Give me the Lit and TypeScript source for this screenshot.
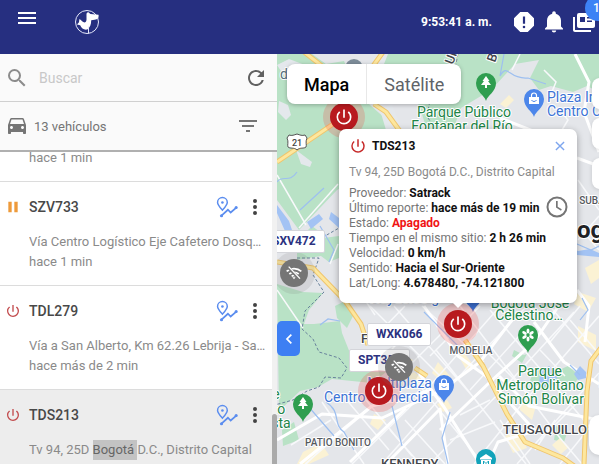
import { LitElement, html, svg, css } from "lit";
import { customElement, property, query } from "lit/decorators.js";
import { classMap } from "lit/directives/class-map.js";

type Status = "off" | "paused";

interface Vehicle {
  plate: string;
  address: [string, string, string];
  ago: string;
  status: Status;
  selected?: boolean;
}

const VEHICLES: Vehicle[] = [
  { plate: "SXV472", address: ["Bogotá D.C., Distrito Capital", "", ""], ago: "hace 1 min", status: "off" },
  { plate: "SZV733", address: ["Vía Centro Logístico Eje Cafetero Dosquebradas", "", ""], ago: "hace 1 min", status: "paused" },
  { plate: "TDL279", address: ["Vía a San Alberto, Km 62.26 Lebrija - Santander", "", ""], ago: "hace más de 2 min", status: "off" },
  { plate: "TDS213", address: ["Tv 94, 25D ", "Bogotá ", "D.C., Distrito Capital"], ago: "hace más de 19 min", status: "off", selected: true },
];

const DETAILS: { label: string; value: string; alert?: boolean }[] = [
  { label: "Proveedor", value: "Satrack" },
  { label: "Último reporte", value: "hace más de 19 min" },
  { label: "Estado", value: "Apagado", alert: true },
  { label: "Tiempo en el mismo sitio", value: "2 h 26 min" },
  { label: "Velocidad", value: "0 km/h" },
  { label: "Sentido", value: "Hacia el Sur-Oriente" },
  { label: "Lat/Long", value: "4.678480, -74.121800" },
];

const icon = (size: number, body: unknown) =>
  html`<svg width=${size} height=${size} viewBox="0 0 24 24" fill="currentColor" aria-hidden="true">${body}</svg>`;

const power = svg`<path d="M13 3h-2v10h2V3zm4.83 2.17-1.42 1.42A6.92 6.92 0 0 1 19 12c0 3.87-3.13 7-7 7A6.995 6.995 0 0 1 7.58 6.58L6.17 5.17A8.932 8.932 0 0 0 3 12a9 9 0 0 0 18 0c0-2.74-1.23-5.18-3.17-6.83z"/>`;
const pause = svg`<path d="M5 4h5v16H5zM14 4h5v16h-5z"/>`;
const menu = svg`<path d="M3 18h18v-2H3v2zm0-5h18v-2H3v2zm0-7v2h18V6H3z"/>`;
const search = svg`<path d="M15.5 14h-.79l-.28-.27A6.471 6.471 0 0 0 16 9.5 6.5 6.5 0 1 0 9.5 16c1.61 0 3.09-.59 4.23-1.57l.27.28v.79l5 4.99L20.49 19l-4.99-5zm-6 0C7.01 14 5 11.99 5 9.5S7.01 5 9.5 5 14 7.01 14 9.5 11.99 14 9.5 14z"/>`;
const refresh = svg`<path d="M17.65 6.35A7.958 7.958 0 0 0 12 4c-4.42 0-7.99 3.58-7.99 8s3.57 8 7.99 8c3.73 0 6.84-2.55 7.73-6h-2.08A5.99 5.99 0 0 1 12 18c-3.31 0-6-2.69-6-6s2.69-6 6-6c1.66 0 3.14.69 4.22 1.78L13 11h7V4l-2.35 2.35z"/>`;
const car = svg`<path d="M18.92 5.01C18.72 4.42 18.16 4 17.5 4h-11c-.66 0-1.21.42-1.42 1.01L3 11v8c0 .55.45 1 1 1h1c.55 0 1-.45 1-1v-1h12v1c0 .55.45 1 1 1h1c.55 0 1-.45 1-1v-8l-2.08-5.99zM6.5 15c-.83 0-1.5-.67-1.5-1.5S5.67 12 6.5 12s1.5.67 1.5 1.5S7.33 15 6.5 15zm11 0c-.83 0-1.5-.67-1.5-1.5s.67-1.5 1.5-1.5 1.5.67 1.5 1.5-.67 1.5-1.5 1.5zM5 10l1.5-4.5h11L19 10H5z"/>`;
const filter = svg`<path d="M10 18h4v-2h-4v2zM3 6v2h18V6H3zm3 7h12v-2H6v2z"/>`;
const more = svg`<path d="M12 8a2 2 0 1 0 0-4 2 2 0 0 0 0 4zm0 2a2 2 0 1 0 0 4 2 2 0 0 0 0-4zm0 6a2 2 0 1 0 0 4 2 2 0 0 0 0-4z"/>`;
const route = svg`<g fill="none" stroke="currentColor" stroke-width="1.6"><path d="M7 15.500C4 12 1.700 9.500 1.700 7a5.300 5.300 0 0 1 10.600 0C12.300 9.500 10 12 7 15.500z"/><path d="M6 21.500l7-6.500 3 3 6.500-5.500" stroke-width="1.900"/></g><circle cx="7" cy="7" r="1.400"/><circle cx="6" cy="21.500" r="1.700"/><circle cx="22" cy="12.500" r="1.700"/>`;
const warning = svg`<path d="M15.730 2H8.270L2 8.270v7.460L8.270 22h7.460L22 15.730V8.270L15.730 2zM12 18.300a1.300 1.300 0 1 1 0-2.600 1.300 1.300 0 0 1 0 2.600zm1.100-4.500h-2.200V6.500h2.200v7.300z"/>`;
const bell = svg`<path d="M12 22.500c1.200 0 2.200-.9 2.200-2H9.800c0 1.100 1 2 2.200 2zm7-6v-6c0-3.200-1.900-5.900-5.200-6.700V3a1.800 1.800 0 0 0-3.600 0v.8C6.900 4.600 5 7.300 5 10.500v6l-2 2v1h18v-1l-2-2z"/>`;
const news = svg`<path d="M3 7H1v13c0 1.100.9 2 2 2h16v-2H3V7z"/><path d="M21 3H7a2 2 0 0 0-2 2v11c0 1.100.9 2 2 2h14c1.100 0 2-.9 2-2V5a2 2 0 0 0-2-2zm-8 9H8V7h5v5zm7 0h-5v-1.500h5V12zm0-3.500h-5V7h5v1.500z"/>`;
const clock = svg`<path d="M12 1.500a10.500 10.500 0 1 0 0 21 10.500 10.500 0 0 0 0-21zm0 19a8.500 8.500 0 1 1 0-17 8.500 8.500 0 0 1 0 17z"/><path d="M12.700 6h-1.700v6.600l5 3.100.8-1.400-4.100-2.500V6z"/>`;
const cross = svg`<path d="M5 5l14 14M19 5L5 19" fill="none" stroke="currentColor" stroke-width="2.400"/>`;
const chevron = svg`<path d="M15.500 5.500L9 12l6.500 6.500" fill="none" stroke="currentColor" stroke-width="2.600"/>`;
const noSignal = svg`<g fill="none" stroke="currentColor" stroke-width="2.600"><path d="M1 9.500C7 4 17 4 23 9.500"/><path d="M5 13.500c4-3.500 10-3.500 14 0"/><path d="M8.500 17c2-1.600 5-1.600 7 0"/></g><path d="M9.500 18.500h5L12 21.500z"/><path d="M3 3l17 18" stroke="#757575" stroke-width="4.500"/><path d="M4 2.500l17 18" stroke="currentColor" stroke-width="2"/>`;

const logo = html`<svg width="26" height="26" viewBox="0 0 26 26" aria-label="Satrack" role="img">
  <circle cx="13" cy="13" r="11.500" fill="none" stroke="#e6e9fb" stroke-width="1"/>
  <path fill="#fff" d="M12.500 4.500l1.500-1.500 2.500 2 8 .8c.6 2.600-.6 4.800-3.900 5l-3.400.4c0 4.200-1.200 7.200-3.800 9.300-3.400.6-6-.9-7.200-4.200L3 15.500l2-2.200.4-3.300c2.200 1.200 3.300 3.400 5.200 3.600 1.700-.6 2.100-2.400 1.900-4.700z"/>
  <path d="M14.500 17.500v7" stroke="#e6e9fb"/>
</svg>`;

const pin = (x: number, y: number, color: string, glyph: unknown) => svg`
  <g transform="translate(${x} ${y})">
    <path fill=${color} d="M0 15C-1.500 9-10 6-10-3a10 10 0 0 1 20 0C10 6 1.500 9 0 15z"/>
    <g fill="#fff">${glyph}</g>
  </g>`;
const tree = svg`<path d="M0-10l3.500 5H2l3 4H1v3h-2v-3h-4l3-4h-1.500z"/>`;
const bag = svg`<path d="M-5-5H5v7H-5z"/><path d="M-2.500-5v-1.500a2.500 2.500 0 0 1 5 0V-5" fill="none" stroke="#fff" stroke-width="1.200"/><path d="M-2.500-2c1 2 4 2 5 0" fill="none" stroke="#4c86ea"/>`;
const flower = svg`${[0, 60, 120, 180, 240, 300].map((a) => svg`<ellipse cy="-4" rx="1.500" ry="2.500" transform="translate(0 -3) rotate(${a})"/>`)}`;
const museum = svg`<path d="M-6-4L0-8l6 4v1.500H-6zM-5-2H5v6H-5z"/><path d="M-2.500 3v-4L0 1.500 2.500-1v4" fill="none" stroke="#12a3ba"/>`;

@customElement("city-map")
export class CityMap extends LitElement {
  static styles = css`
    :host { display: block; height: 100%; overflow: hidden; background: #e4e6ea; }
    svg { display: block; width: 100%; height: 100%; font-family: Roboto, sans-serif; }
    .park { fill: #b9e2c6; }
    .water { fill: #a3c3f4; }
    .stream { fill: none; stroke: #9dbff0; stroke-width: 1.2; }
    .street { fill: none; stroke: #f8f9fb; stroke-width: 1.5; }
    .avenue { fill: none; stroke: #fff; stroke-width: 3; stroke-linejoin: round; }
    .block { fill: #fbf2d4; }
    .casing { fill: none; stroke: #f0c56c; stroke-width: 5; stroke-linejoin: round; }
    .highway { fill: none; stroke: #fde79e; stroke-width: 3; stroke-linejoin: round; }
    .limit { fill: none; stroke: #68829c; stroke-width: 1; stroke-dasharray: 3 2; }
    text { paint-order: stroke; stroke: #fff; stroke-width: 2px; stroke-linejoin: round; font-size: 14px; }
    .nature { fill: #218447; text-anchor: middle; }
    .shop { fill: #3c73d6; }
    .end { text-anchor: end; }
    .area { fill: #55595e; font-size: 10px; font-weight: 500; text-anchor: middle; }
    .district { fill: #44474b; font-size: 13px; font-weight: 500; }
    .city { fill: #202124; font-size: 24px; font-weight: 700; }
    .shield { fill: #fff; stroke: #555; }
    .number { fill: #444; font-size: 9px; font-weight: 500; text-anchor: middle; stroke: none; }
  `;

  render() {
    return html`<svg viewBox="277 54 322 410" preserveAspectRatio="xMinYMin slice" role="img" aria-label="Mapa de Bogotá">
      <path class="park" d="M277 54h35l14 10 18-3 12 28 14 16 25 22-28 9-8 42-22 12-38 40-22-30z"/>
      <path class="park" d="M385 54h70l144 0v38l-12-6-14 6-22-6-12 4-9-12 9-18-24 4-24 26-30 18-8 22h-26l-8-25-22-20-18-8z"/>
      <path class="park" d="M297 248l10-8 32-4v22l-10 4-8-6-24 4z"/>
      <path class="park" d="M277 284l26 8 20 1-14 17-5 14 10 0 26-3 2 12 8 20 12 8 28 8-18 14-40-4-14 8-18 4-21 20z"/>
      <path class="park" d="M335 306l8-4 12 10-8 16-10-10zM282 430l12-8 5 18-16 6zM514 350l10 5 3-1-5 9-10-7zM536 368l14 6 18-8 12 10-6 8-18-4-14 10-12-10zM556 426l12 4-4 12-10-2zM300 238l12-12 8 6-8 12z"/>
      <path d="M277 65l12-6 16 6 2 12-18 6zM279 101l9 4 3 10-5 5-8-8zM296 150l16 12-2 5-9-3zM362 66l18-12h8l-12 30zM380 110l12-6 10 26h-16z" fill="#e4e8ec"/>

      <path class="block" d="M303 452l18-9 8 12-20 9h-12zM374 414l12 6-8 10-8-6zM398 382l16-10 12 10-14 8zM438 362l12 14-9 5-9-8zM492 150l10-6 6 8-10 7zM500 104l9-9 5 5-8 8zM585 268l14-8v18l-8 6zM578 292l18 6-8 14-14-8zM462 350l12 16-7 5-8-14zM520 400l16 6-4 14-12-10zM578 326l18 9v16l-18-9zM560 438l9 9-8 7-9-9zM391 350l22 10-12 12-18-9zM437 404l10-4 5 8-9 4zM505 436l13-5 9 17-14 5z"/>

      <g class="street">
        <path d="M352 464L420 397 502 304M382 464l84-95 60-62M430 464l74-76 70-76M474 464l48-60 77-88M517 464l82-91M560 464l39-48M305 464l70-60M322 402l42 62M345 398l44 52M366 400l46 56M415 380l68 84M436 350l90 114M394 306l80 92 42 54M460 306l100 132 22 26M490 310l109 128M548 304l51 60M422 306l62 56M370 306l70 70M410 330l-32 34M445 330l-68 68M578 180l21 30M560 110l8 10-9 15M578 240l21-24M578 226l21 24M544 70l12 12-5 12 9 7M520 54l-8 16M405 306l-35 36M480 306l-50 50M530 324l-60 66M580 306l-30 36M277 290l26 38M277 175l29 50M299 228l39-44M338 244l-8 20M331 420l-40 25M341 430l-35 34"/>
        <path d="M345 270l30 45M540 350l25 26M570 320l29 34M485 350l45 45M500 420l30 44M405 420l40 44M390 430l30 34M580 400l-40 40M460 415l30-15M450 440l45-18M535 450l20-30"/>
      </g>
      <g class="avenue">
        <path d="M277 440l45-26 60 4 60-28 38-28 38-50M418 372l26 35 36 57M300 464l72-58 60-16M424 306l34 50 28 20 50 56M440 430l50-48 44-40 26-38M575 54l14 28-5 30 15 40M577 158l22 8M500 118l38 15M577 290l12 16-4 36"/>
        <path d="M350 462l56-54M386 464l54-55 8 55M599 420l-70-14-30-30M599 384l-35-22-30-40M488 464l10-22 40-12"/>
      </g>

      <path class="water" d="M277 205l12 16 4 12-8-2-8-18zM331 212l8 6v10l-10-9zM307 222l12-8 4 5-12 10zM560 250l10-3 8 4 12-2 9 4v4l-22-2zM574 374l6-8 6 6 0 6-8 2zM540 372l9-6 10 8-8 14-12-4z"/>
      <path class="stream" d="M277 182c6-8 12 2 20-10M500 76c8-14 8 4 28 2l18 6M500 76l4-22M300 210l24-22M326 402c16 10 6 22 18 30l10 18M308 406l26 30M392 406l10 40M577 244l14 6 8-4M424 312l40 40M320 226l14 24-5 12M320 325l8-6 12 2M570 365l10 10M582 298l6 12-8 10M450 412l-8 26 6 26"/>

      <path class="limit" d="M318 240l21-12M297 258l22 0-6 17 11 17-19 19-3 18 11 10 6 13 20 6 8 10-6 10-16-1-6 10-12 4-14 9-22 6M452 54l-4 25-15 4-6 34M428 118l14 20M458 54l-5 24-12 3"/>

      <path class="casing" d="M277 162l68-46M299 48l28 22M386 48l-26 36M374 104l12 8 16 22M277 262l36 6 32 33 16 23 7 21M415 368l12 8M465 340l18 26 24 48 18 28 38 16 14 10M603 345l-12 16-4 30-3 73"/>
      <path class="highway" d="M277 162l68-46M299 48l28 22M386 48l-26 36M374 104l12 8 16 22M277 262l36 6 32 33 16 23 7 21M415 368l12 8M465 340l18 26 24 48 18 28 38 16 14 10M603 345l-12 16-4 30-3 73"/>

      <circle cx="354" cy="68" r="9" fill="#7d8c99"/>
      <path class="shield" d="M289 135c3 1 5 0 8-1 3 1 5 2 8 1l2 3c-2 4 0 7-1 9-2 2-6 0-9 3-3-3-7-1-9-3-1-2 1-5-1-9z"/>
      <text class="number" x="297" y="146">21</text>

      <text class="district" transform="translate(453 65) rotate(-70)">Ur</text>
      <text class="district" transform="translate(495 63) rotate(-70)">B</text>
      <text x="280" y="79" fill="#55707c">d</text>
      <text class="nature" x="464" y="117">Parque Público</text>
      <text class="nature" x="462" y="131">Fontanar del Río</text>
      <text class="shop" x="547" y="102">Plaza Imperial</text>
      <text class="shop" x="547" y="116">Centro Comercial</text>
      <text class="area" x="592" y="204">SUBA</text>
      <text class="city" x="577" y="238">ogotá</text>
      <text class="nature" x="530" y="308">Bogotá José</text>
      <text class="nature" x="529" y="320">Celestino…</text>
      <text class="shop end" x="439" y="303">Hayuelos g</text>
      <text class="area" x="471" y="354">MODELIA</text>
      <text class="nature" x="540" y="376">Parque</text>
      <text class="nature" x="540" y="390">Metropolitano</text>
      <text class="nature" x="541" y="404">Simón Bolívar</text>
      <text class="nature" x="603" y="387">P</text>
      <text class="district" x="361" y="343">F</text>
      <text class="shop end" x="432" y="388">Multiplaza</text>
      <text class="shop end" x="432" y="402">Centro Comercial</text>
      <text class="nature" x="276" y="399">e</text>
      <text class="nature" x="279" y="414">to</text>
      <text class="nature" x="281" y="428">sta</text>
      <text class="area" x="338" y="446">PATIO BONITO</text>
      <text class="district" x="381" y="468">KENNEDY</text>
      <text class="district" x="503" y="434">TEUSAQUILLO</text>

      ${pin(486, 86, "#2f9e50", tree)}
      ${pin(534, 102, "#4c86ea", bag)}
      ${pin(303, 407, "#2f9e50", tree)}
      ${pin(444, 388, "#4c86ea", bag)}
      ${pin(528, 338, "#2f9e50", flower)}
      ${pin(473, 297, "#3c6fd0", "")}
      ${pin(486, 462, "#12a3ba", museum)}
    </svg>`;
  }
}

@customElement("vehicle-marker")
export class VehicleMarker extends LitElement {
  @property() kind: "off" | "lost" = "off";

  static styles = css`
    :host { display: block; width: 42px; height: 42px; border-radius: 50%; }
    .halo { display: grid; place-items: center; width: 100%; height: 100%; padding: 0; border: 0; border-radius: 50%; background: #ef535040; }
    .disc { display: grid; place-items: center; width: 28px; height: 28px; border-radius: 50%; background: #b81a1f; color: #fff; }
    .lost { background: #75757526; }
    .lost .disc { background: #757575; }
  `;

  render() {
    const lost = this.kind === "lost";
    return html`<button class=${classMap({ halo: true, lost })} aria-label=${lost ? "Sin señal" : "Apagado"}>
      <span class="disc">${lost ? icon(16, noSignal) : icon(20, power)}</span>
    </button>`;
  }
}

@customElement("vehicle-row")
export class VehicleRow extends LitElement {
  @property({ attribute: false }) vehicle!: Vehicle;

  static styles = css`
    :host { display: block; }
    .row { box-sizing: border-box; height: 104px; padding: 12px 5px 0 0; border-top: 1px solid #dcdcdc; display: grid; grid-template-columns: 29px minmax(0, 1fr); align-content: start; background: #fff; }
    .selected { background: #ededed; }
    .status { display: grid; place-items: center start; padding-left: 5px; color: #c24a4c; }
    .paused { color: #ee9a3a; }
    .head { display: flex; align-items: center; height: 26px; }
    .plate { flex: 1; margin: 0; font-size: 14px; font-weight: 500; color: #484848; }
    .tool { display: grid; place-items: center; width: 24px; height: 24px; padding: 0; border: 0; background: none; color: #5b8def; }
    .more { color: #424242; margin-left: 4px; }
    .info { grid-column: 2; margin-top: 12px; font-size: 13px; line-height: 20px; color: #8a8a8a; }
    .line { margin: 0; overflow: hidden; white-space: nowrap; text-overflow: ellipsis; }
    mark { padding: 3px 0; background: #c3c3c3; color: #666; }
  `;

  render() {
    const v = this.vehicle;
    const [before, hit, after] = v.address;
    return html`<article class=${classMap({ row: true, selected: !!v.selected })}>
      <span class=${classMap({ status: true, paused: v.status === "paused" })}>${icon(16, v.status === "paused" ? pause : power)}</span>
      <div class="head">
        <h2 class="plate">${v.plate}</h2>
        <button class="tool" aria-label="Recorrido">${icon(22, route)}</button>
        <button class="tool more" aria-label="Opciones">${icon(24, more)}</button>
      </div>
      <div class="info">
        <p class="line">${before}${hit ? html`<mark>${hit}</mark>` : ""}${after}</p>
        <p class="line">${v.ago}</p>
      </div>
    </article>`;
  }
}

@customElement("app-root")
export class AppRoot extends LitElement {
  @query(".scroller") private scroller!: HTMLElement;

  static styles = css`
    :host { display: flex; flex-direction: column; height: 100vh; overflow: hidden; font-family: Roboto, sans-serif; color: #757575; }
    button { display: grid; place-items: center; padding: 0; border: 0; background: none; color: inherit; font: inherit; }
    svg { display: block; }

    .bar { box-sizing: border-box; flex: none; height: 54px; padding: 6px 3px 0 15px; display: flex; align-items: flex-start; background: #262f80; color: #fff; }
    .brand { flex: 1; margin-left: 35px; padding-top: 3px; }
    .tools { display: flex; align-items: center; gap: 6px; height: 32px; }
    .time { margin-right: 14px; font-size: 12px; font-weight: 700; }
    .news { position: relative; }
    .badge { position: absolute; left: 13px; top: -15px; width: 26px; height: 26px; padding-left: 8px; box-sizing: border-box; border-radius: 50%; background: #3d82f5; font-size: 12px; font-weight: 500; line-height: 26px; text-align: left; }

    .body { flex: 1; min-height: 0; display: flex; }
    .side { flex: none; width: 277px; display: flex; flex-direction: column; background: #fafafa; }
    .find { box-sizing: border-box; height: 48px; padding: 0 9px 0 5px; display: flex; align-items: center; gap: 10px; border-bottom: 1px solid #d0d0d0; }
    .find svg { color: #8c8c8c; }
    .find button svg { color: #616161; }
    .query { flex: 1; min-width: 0; padding: 0; border: 0; outline: 0; background: none; font: 14px Roboto, sans-serif; color: #424242; }
    .query::placeholder { color: #c8c8c8; }
    .count { box-sizing: border-box; height: 50px; padding: 0 17px 0 5px; display: flex; align-items: center; gap: 5px; border-bottom: 2px solid #b0b0b0; font-size: 13px; }
    .total { flex: 1; }
    .list { flex: 1; min-height: 0; display: flex; background: #f1f1f1; }
    .scroller { flex: 1; min-width: 0; overflow-y: auto; scrollbar-width: none; background: #fff; }
    .rail { flex: none; width: 5px; display: flex; flex-direction: column; justify-content: flex-end; }
    .thumb { height: 50px; border-radius: 3px 3px 0 0; background: #aaa; }

    .map { position: relative; flex: 1; min-width: 0; overflow: hidden; }
    .types { position: absolute; left: 10px; top: 10px; display: flex; height: 40px; border-radius: 8px; background: #fff; box-shadow: 0 1px 4px #0004; font-size: 18px; }
    .type { padding: 0 17px; color: #5f6368; }
    .current { color: #000; font-weight: 500; border-right: 1px solid #e8e8e8; }
    .fold { position: absolute; left: 0; top: 267px; width: 23px; height: 35px; border-radius: 5px; background: #3d7ff3; color: #fff; }
    .controls { position: absolute; left: 315px; width: 40px; display: grid; gap: 9px; }
    .zoom { top: 24px; }
    .street { top: 361px; left: 312px; }
    .control { height: 31px; width: 40px; border-radius: 8px; background: #fff; box-shadow: 0 1px 4px #0002; }
    .street .control { height: 40px; border-radius: 10px; }
    .spot { position: absolute; }
    .tag { position: absolute; box-sizing: border-box; height: 23px; padding: 0 8px; border: 1px solid #d4d5da; border-radius: 2px; background: #fff; color: #2c3280; font-size: 12px; font-weight: 700; line-height: 21px; }

    .popup { position: absolute; left: 62px; top: 75px; box-sizing: border-box; width: 238px; padding: 6px 10px 12px; border-radius: 7px; background: #fff; box-shadow: 0 2px 7px #0005; font-size: 12px; }
    .popup::after { content: ""; position: absolute; left: 114px; bottom: -5px; border: 5px solid transparent; border-top-color: #fff; border-bottom: 0; }
    .title { display: flex; align-items: center; gap: 5px; height: 22px; color: #c62828; }
    .name { flex: 1; margin: 0; font-size: 12px; font-weight: 700; color: #111; }
    .close { color: #7ea6ee; }
    .place { margin: 8px 0 6px; line-height: 15px; color: #8a8a8a; white-space: nowrap; }
    .facts { margin: 0; line-height: 15px; white-space: nowrap; }
    .fact { display: flex; gap: 3px; }
    .value { margin: 0; font-weight: 700; color: #111; }
    .alert { color: #f01414; }
    .clock { position: absolute; right: 8px; top: 66px; color: #757575; }
  `;

  firstUpdated() {
    this.updateComplete.then(() => requestAnimationFrame(() => { this.scroller.scrollTop = 75; }));
  }

  render() {
    return html`
      <header class="bar">
        <button aria-label="Menú">${icon(24, menu)}</button>
        <div class="brand">${logo}</div>
        <div class="tools">
          <time class="time">9:53:41 a. m.</time>
          <button aria-label="Alertas">${icon(24, warning)}</button>
          <button aria-label="Notificaciones">${icon(24, bell)}</button>
          <button class="news" aria-label="Noticias">${icon(24, news)}<span class="badge">1</span></button>
        </div>
      </header>
      <div class="body">
        <aside class="side">
          <div class="find">
            ${icon(24, search)}
            <input class="query" type="search" placeholder="Buscar" aria-label="Buscar" />
            <button aria-label="Actualizar">${icon(24, refresh)}</button>
          </div>
          <div class="count">
            ${icon(24, car)}
            <span class="total">13 vehículos</span>
            <button aria-label="Filtrar">${icon(24, filter)}</button>
          </div>
          <div class="list">
            <div class="scroller">${VEHICLES.map((v) => html`<vehicle-row .vehicle=${v}></vehicle-row>`)}</div>
            <div class="rail"><div class="thumb"></div></div>
          </div>
        </aside>
        <main class="map">
          <city-map></city-map>
          <div class="controls zoom">
            <button class="control" aria-label="Pantalla completa"></button>
            <button class="control" aria-label="Acercar"></button>
            <button class="control" aria-label="Alejar"></button>
          </div>
          <div class="controls street"><button class="control" aria-label="Street View"></button></div>
          ${this.spot("off", 46, 42)} ${this.spot("lost", -4, 198)}
          ${this.tag("SXV472", -14, 176)} ${this.tag("WXK066", 90, 269)} ${this.tag("SPT350", 72, 295)}
          ${this.spot("off", 81, 316)} ${this.spot("lost", 101, 292)} ${this.spot("off", 160, 249)}
          <div class="types">
            <button class="type current">Mapa</button>
            <button class="type">Satélite</button>
          </div>
          <button class="fold" aria-label="Ocultar panel">${icon(16, chevron)}</button>
          <section class="popup">
            <div class="title">
              ${icon(18, power)}
              <h2 class="name">TDS213</h2>
              <button class="close" aria-label="Cerrar">${icon(14, cross)}</button>
            </div>
            <p class="place">Tv 94, 25D Bogotá D.C., Distrito Capital</p>
            <dl class="facts">
              ${DETAILS.map((d) => html`<div class="fact"><dt>${d.label}:</dt><dd class=${classMap({ value: true, alert: !!d.alert })}>${d.value}</dd></div>`)}
            </dl>
            <button class="clock" aria-label="Historial">${icon(24, clock)}</button>
          </section>
        </main>
      </div>`;
  }

  private spot(kind: "off" | "lost", x: number, y: number) {
    return html`<vehicle-marker class="spot" kind=${kind} style="left:${x}px;top:${y}px"></vehicle-marker>`;
  }

  private tag(plate: string, x: number, y: number) {
    return html`<span class="tag" style="left:${x}px;top:${y}px">${plate}</span>`;
  }
}
